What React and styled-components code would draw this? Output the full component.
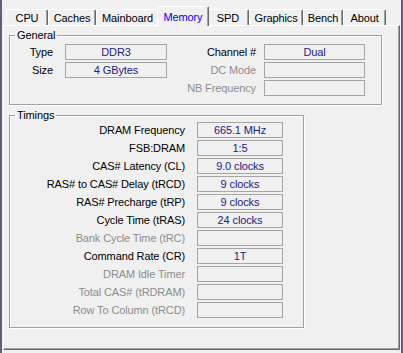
import React from "react";
import styled, { createGlobalStyle } from "styled-components";

const GlobalStyle = createGlobalStyle`
  html, body {
    margin: 0;
    padding: 0;
    background: #f0f0f0;
  }
  * {
    box-sizing: border-box;
  }
`;

const Window = styled.div`
  width: 403px;
  height: 353px;
  background: #f0f0f0;
  border-left: 2px solid #675c7a;
  border-right: 2px solid #675c7a;
  font-family: "Liberation Sans", Arial, sans-serif;
  font-size: 11px;
  letter-spacing: -0.12px;
  color: #000;
  display: flex;
  flex-direction: column;
`;

const TabStrip = styled.div`
  display: flex;
  align-items: flex-end;
  height: 25px;
  padding-left: 4px;
`;

const Tab = styled.div`
  position: relative;
  width: ${p => p.$w}px;
  height: ${p => (p.$active ? 20 : 16)}px;
  margin: ${p => (p.$active ? "0 -2px -1px -2px" : "0")};
  z-index: ${p => (p.$active ? 2 : 1)};
  background: #f0f0f0;
  border-top: 1px solid #fff;
  border-left: 1px solid #fff;
  border-right: 1px solid #696969;
  border-top-left-radius: 2px;
  border-top-right-radius: 2px;
  box-shadow: inset -1px 0 0 #a0a0a0;
  display: flex;
  align-items: ${p => (p.$active ? "flex-start" : "center")};
  padding-top: ${p => (p.$active ? "3px" : "0")};
  justify-content: center;
  color: ${p => (p.$active ? "#0000ff" : "#000")};
  line-height: 14px;
`;

const Panel = styled.div`
  width: 397px;
  height: 325px;
  margin-left: 1px;
  border-top: 1px solid #fff;
  border-left: 1px solid #fff;
  border-right: 1px solid #696969;
  border-bottom: 1px solid #696969;
  box-shadow: inset -1px -1px 0 #a0a0a0;
  padding: 9px 0 0 5px;
  display: flex;
  flex-direction: column;
  gap: 10px;
`;

const Group = styled.div`
  position: relative;
  width: ${p => p.$w}px;
  border: 1px solid #a0a0a0;
  box-shadow: inset 1px 1px 0 #fff, 1px 1px 0 #fff;
  padding: ${p => p.$pad};
`;

const Legend = styled.span`
  position: absolute;
  top: -8px;
  left: 5px;
  padding: 0 2px;
  background: #f0f0f0;
  line-height: 14px;
  color: #000;
`;

const Grid = styled.div`
  display: grid;
  grid-template-columns: ${p => p.$cols};
  grid-auto-rows: 16px;
  row-gap: 2px;
`;

const Label = styled.div`
  text-align: right;
  white-space: nowrap;
  padding-right: ${p => p.$gap}px;
  line-height: 16px;
  color: ${p => (p.$off ? "#8d8d8d" : "#000")};
`;

const Value = styled.div`
  border: 1px solid #a5a5a5;
  text-align: center;
  line-height: 14px;
  color: #1e1a86;
  white-space: nowrap;
`;

const Blank = styled.div``;

const tabs = [
  ["CPU", 42],
  ["Caches", 48],
  ["Mainboard", 63],
  ["Memory", 52, true],
  ["SPD", 42],
  ["Graphics", 54],
  ["Bench", 40],
  ["About", 43]
];

const timings = [
  ["DRAM Frequency", "665.1 MHz"],
  ["FSB:DRAM", "1:5"],
  ["CAS# Latency (CL)", "9.0 clocks"],
  ["RAS# to CAS# Delay (tRCD)", "9 clocks"],
  ["RAS# Precharge (tRP)", "9 clocks"],
  ["Cycle Time (tRAS)", "24 clocks"],
  ["Bank Cycle Time (tRC)", null],
  ["Command Rate (CR)", "1T"],
  ["DRAM Idle Timer", null],
  ["Total CAS# (tRDRAM)", null],
  ["Row To Column (tRCD)", null]
];

const App = () => (
  <Window>
    <GlobalStyle />
    <TabStrip>
      {tabs.map(([name, w, active]) => (
        <Tab key={name} $w={w} $active={active}>
          {name}
        </Tab>
      ))}
    </TabStrip>
    <Panel>
      <Group $w={373} $pad="8px 16px 8px 0">
        <Legend>General</Legend>
        <Grid $cols="55px 102px 97px 101px">
          <Label $gap={12}>Type</Label>
          <Value>DDR3</Value>
          <Label $gap={8}>Channel #</Label>
          <Value>Dual</Value>

          <Label $gap={12}>Size</Label>
          <Value>4 GBytes</Value>
          <Label $gap={8} $off>
            DC Mode
          </Label>
          <Value />

          <Blank />
          <Blank />
          <Label $gap={8} $off>
            NB Frequency
          </Label>
          <Value />
        </Grid>
      </Group>
      <Group $w={295} $pad="6px 20px 9px 0">
        <Legend>Timings</Legend>
        <Grid $cols="187px 86px">
          {timings.map(([label, value]) => (
            <React.Fragment key={label}>
              <Label $gap={12} $off={value === null}>
                {label}
              </Label>
              <Value>{value}</Value>
            </React.Fragment>
          ))}
        </Grid>
      </Group>
    </Panel>
  </Window>
);

export default App;
